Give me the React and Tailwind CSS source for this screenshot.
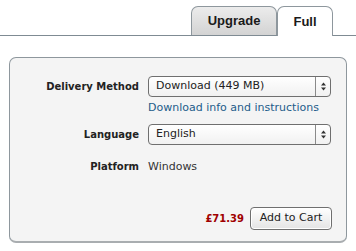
import React from "react";

function SelectBox({ value }) {
  return (
    <div className="flex h-[21px] w-[183px] items-center rounded-[4px] border border-[#6f6f6f] bg-gradient-to-b from-white to-[#f1f1f1]">
      <span className="flex-1 pl-[7px] text-[#222]">{value}</span>
      <div className="flex h-full w-[15px] items-center justify-center border-l border-[#8a8a8a]">
        <svg width="7" height="9" viewBox="0 0 7 9">
          <path d="M3.5 0.5 L6 3.5 L1 3.5 Z" fill="#333" />
          <path d="M1 5.5 L6 5.5 L3.5 8.5 Z" fill="#333" />
        </svg>
      </div>
    </div>
  );
}

export default function App() {
  return (
    <div className="h-[251px] w-[356px] bg-white text-[11px]" style={{ fontFamily: '"DejaVu Sans", Verdana, sans-serif' }}>
      <div className="flex h-[36px] items-end justify-end border-b border-[#7f8b93] pr-[23px]">
        <div className="flex h-[29px] w-[86px] items-center justify-center rounded-t-[7px] border border-b-0 border-[#8e979d] bg-gradient-to-b from-[#ececec] to-[#d3d3d3] font-bold text-[#1a1a1a]" style={{ fontFamily: "Arial, 'Liberation Sans', sans-serif", fontSize: 13 }}>
          Upgrade
        </div>
        <div className="-mb-px flex h-[30px] w-[56px] items-center justify-center rounded-t-[7px] border border-b-0 border-[#8e979d] bg-white font-bold text-[#1a1a1a]" style={{ fontFamily: "Arial, 'Liberation Sans', sans-serif", fontSize: 13 }}>
          Full
        </div>
      </div>

      <div className="mx-[9px] mt-[21px] flex h-[186px] flex-col rounded-[7px] border border-[#8e979d] border-b-2 border-b-[#a9adb0] bg-[#f4f4f4] pr-[14px] pt-[18px]">
        <div className="grid grid-cols-[129px_1fr] items-center gap-x-[9px]">
          <div className="text-right text-[10px] font-bold text-[#222]">Delivery Method</div>
          <SelectBox value="Download (449 MB)" />
          <div />
          <div className="mt-[3px] text-[#1d5c8a]">Download info and instructions</div>
          <div className="mt-[7px] text-right text-[10px] font-bold text-[#222]">Language</div>
          <div className="mt-[7px]">
            <SelectBox value="English" />
          </div>
          <div className="mt-[14px] text-right text-[10px] font-bold text-[#222]">Platform</div>
          <div className="mt-[14px] text-[#333]">Windows</div>
        </div>

        <div className="mt-auto mb-[11px] flex items-center justify-end gap-[6px]">
          <span className="text-[10px] font-bold text-[#a00000]">£71.39</span>
          <button className="h-[23px] w-[82px] rounded-[4px] border border-[#6f6f6f] bg-gradient-to-b from-white to-[#e4e4e4] text-[#222] shadow-[inset_0_0_0_1px_#fff]">
            Add to Cart
          </button>
        </div>
      </div>
    </div>
  );
}
